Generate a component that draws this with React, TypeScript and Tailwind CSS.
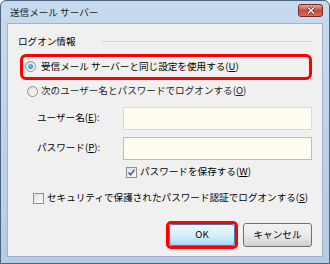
import React from "react";

const font = { fontFamily: '"Noto Sans CJK JP", "Noto Sans", sans-serif' };

function Radio({ checked }: { checked?: boolean }) {
  return (
    <span className="w-[11px] h-[11px] rounded-full border border-[#8e8f8f] bg-gradient-to-br from-[#dcdcdc] to-[#ffffff] flex items-center justify-center shrink-0">
      {checked && <span className="w-[5px] h-[5px] rounded-full bg-[radial-gradient(circle_at_40%_40%,#7fd0ff,#0d5fa8)]" />}
    </span>
  );
}

function Check({ checked }: { checked?: boolean }) {
  return (
    <span className="w-[11px] h-[11px] border border-[#8e8f8f] bg-gradient-to-br from-[#e0e0e0] to-[#fbfbfb] flex items-center justify-center shrink-0">
      {checked && (
        <svg width="9" height="9" viewBox="0 0 9 9">
          <path d="M1.5 4.5 L3.5 6.8 L7.5 1.8" stroke="#4a5f97" strokeWidth="1.6" fill="none" />
        </svg>
      )}
    </span>
  );
}

export default function App() {
  return (
    <div className="w-[330px] h-[264px] bg-white" style={font}>
      <div className="w-[330px] h-[264px] flex flex-col rounded-t-[6px] border border-[#50637a] bg-gradient-to-b from-[#c7dbef] via-[#bcd3ea] to-[#b4cde6] text-[9.6px] text-black leading-none whitespace-nowrap">
        <div className="h-[22px] flex items-center justify-between pl-[9px] pr-[6px]">
          <span className="text-[9.6px] text-[#1a1a1a] pt-[2px]">送信メール サーバー</span>
          <div className="w-[25px] h-[13px] mt-[-4px] rounded-[3px] border border-[#6d2a22] bg-gradient-to-b from-[#e8a598] via-[#c94a3a] to-[#d86e55] flex items-center justify-center">
            <svg width="10" height="9" viewBox="0 0 10 9">
              <path d="M2 1.5 L8 7.5 M8 1.5 L2 7.5" stroke="#4a1f1a" strokeWidth="3" />
              <path d="M2 1.5 L8 7.5 M8 1.5 L2 7.5" stroke="#ffffff" strokeWidth="1.6" />
            </svg>
          </div>
        </div>
        <div className="flex-1 mx-[6px] mb-[6px] border border-[#a0b3c8] bg-[#f0f0f0] flex flex-col px-[10px] pt-[13px]">
          <div className="flex items-center">
            <span>ログオン情報</span>
            <div className="flex-1 ml-[26px] h-[2px] border-t border-[#d5d5d5] border-b-white mt-[1px]" />
          </div>
          <div className="mt-[7px] ml-[2px] h-[26px] rounded-[6px] border-[3px] border-[#ff0000] flex items-center pl-[2px] gap-[5px]">
            <Radio checked />
            <span>受信メール サーバーと同じ設定を使用する(<span className="underline">U</span>)</span>
          </div>
          <div className="mt-[6px] ml-[9px] flex items-center gap-[3px]">
            <Radio />
            <span className="text-[#222]">次のユーザー名とパスワードでログオンする(<span className="underline">O</span>)</span>
          </div>
          <div className="mt-[10px] flex items-center">
            <span className="w-[105px] pl-[19px]">ユーザー名(<span className="underline">E</span>):</span>
            <div className="flex-1 h-[23px] border border-[#d9dcdf] bg-[#fffdf1]" />
          </div>
          <div className="mt-[7px] flex items-center">
            <span className="w-[105px] pl-[19px]">パスワード(<span className="underline">P</span>):</span>
            <div className="flex-1 h-[23px] border border-[#aac0d8] bg-[#fffdf1]" />
          </div>
          <div className="mt-[7px] ml-[108px] flex items-center gap-[3px]">
            <Check checked />
            <span>パスワードを保存する(<span className="underline">W</span>)</span>
          </div>
          <div className="mt-[15px] ml-[15px] flex items-center gap-[3px]">
            <Check />
            <span>セキュリティで保護されたパスワード認証でログオンする(<span className="underline">S</span>)</span>
          </div>
          <div className="mt-[17px] flex justify-end items-center gap-[5px]">
            <div className="rounded-[5px] border-[3px] border-[#ff0000] p-0">
              <div className="w-[66px] h-[22px] rounded-[3px] border border-[#3c7fb1] bg-gradient-to-b from-[#eaf6fd] via-[#d9f0fc] to-[#a7d9f5] flex items-center justify-center">
                OK
              </div>
            </div>
            <div className="w-[69px] h-[24px] rounded-[3px] border border-[#707070] bg-gradient-to-b from-[#f2f2f2] via-[#ebebeb] to-[#cfcfcf] flex items-center justify-center">
              キャンセル
            </div>
          </div>
        </div>
      </div>
    </div>
  );
}
